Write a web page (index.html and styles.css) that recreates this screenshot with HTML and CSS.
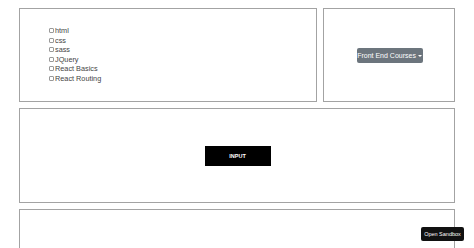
FILE: index.html
```html
<!DOCTYPE html>
<html lang="en">
<head>
    <meta charset="UTF-8">
    <meta name="viewport" content="width=device-width, initial-scale=1.0">
    <title>Courses</title>
    <link rel="stylesheet" href="styles.css">
</head>
<body>
    <div class="page">
        <div class="row">
            <div class="box courses">
                <label class="course"><input type="checkbox">html</label>
                <label class="course"><input type="checkbox">css</label>
                <label class="course"><input type="checkbox">sass</label>
                <label class="course"><input type="checkbox">JQuery</label>
                <label class="course"><input type="checkbox">React Basics</label>
                <label class="course"><input type="checkbox">React Routing</label>
            </div>
            <div class="box picker">
                <button class="dropdown">Front End Courses <span class="caret"></span></button>
            </div>
        </div>
        <div class="box input-box">
            <button class="input-btn">INPUT</button>
        </div>
        <div class="box output-box"></div>
    </div>
    <a class="sandbox" href="#">Open Sandbox</a>
</body>
</html>
```

FILE: styles.css
```css
body {
    margin: 0;
    height: 248px;
    background-color: #fff;
    font-family: "Liberation Sans", Arial, sans-serif;
    overflow: hidden;
}
.page {
    display: flex;
    flex-direction: column;
    gap: 6px;
    width: 436px;
    padding: 8px 0 0 19px;
}
.row {
    display: flex;
    gap: 6px;
}
.box {
    box-sizing: border-box;
    border: 1.5px solid #a3a3a3;
    height: 94px;
}
.courses {
    width: 298px;
    padding: 17px 0 0 29px;
    display: flex;
    flex-direction: column;
}
.course {
    display: flex;
    align-items: center;
    height: 9.5px;
    font-size: 7.3px;
    color: #444;
}
.course input {
    appearance: none;
    box-sizing: border-box;
    width: 5px;
    height: 5px;
    margin: 0 1px 0 0;
    border: 0.5px solid #999;
    border-radius: 1px;
    background: #fff;
}
.picker {
    width: 132px;
    display: flex;
    justify-content: center;
    align-items: center;
}
.dropdown {
    background-color: #6c757d;
    color: #fff;
    border: none;
    border-radius: 2px;
    font-family: inherit;
    font-size: 7px;
    height: 15px;
    width: 66px;
    padding: 0;
    margin-left: 1px;
}
.caret {
    display: inline-block;
    border-top: 2px solid #fff;
    border-left: 2px solid transparent;
    border-right: 2px solid transparent;
    vertical-align: 1px;
}
.input-box {
    height: 95px;
    display: flex;
    justify-content: center;
    align-items: center;
}
.input-btn {
    background-color: #000;
    color: #fff;
    border: none;
    font-family: inherit;
    font-weight: bold;
    font-size: 5.5px;
    width: 66px;
    height: 20px;
    padding: 0;
    margin-left: 1px;
}
.output-box {
    height: 40px;
    border-bottom: none;
}
.sandbox {
    position: absolute;
    left: 421px;
    top: 227px;
    width: 43px;
    height: 14px;
    border-radius: 2px;
    background-color: #111;
    color: #fff;
    font-size: 5.5px;
    text-decoration: none;
    display: flex;
    justify-content: center;
    align-items: center;
}
```
